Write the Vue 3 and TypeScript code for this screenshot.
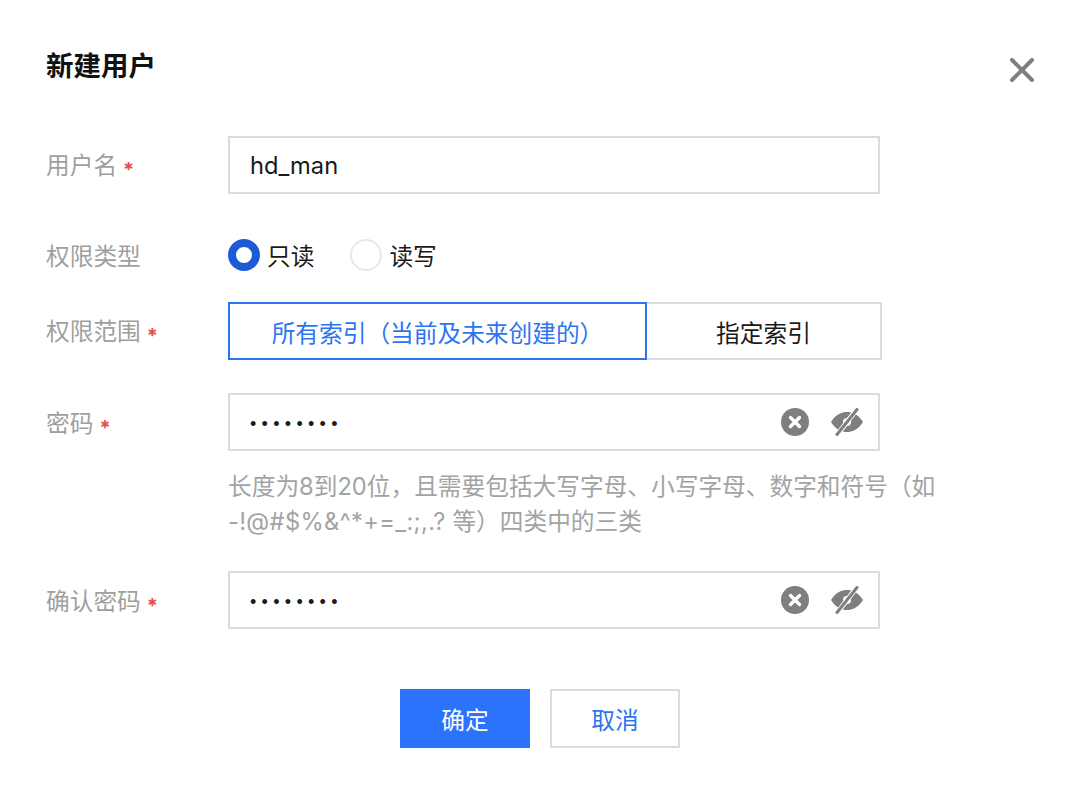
<script setup lang="ts">
import { ref } from 'vue'

const username = ref('hd_man')
const dots = '••••••••'
</script>

<template>
  <div class="dialog">
    <header class="head">
      <h1 class="title">新建用户</h1>
      <button class="close" aria-label="关闭">
        <svg viewBox="0 0 24 24" width="24" height="24">
          <path d="M2 2 L22 22 M22 2 L2 22" stroke="#7f7f7f" stroke-width="4" stroke-linecap="round" fill="none" />
        </svg>
      </button>
    </header>

    <div class="row r-name">
      <label class="label low">用户名<i class="req">*</i></label>
      <div class="input"><span class="value">{{ username }}</span></div>
    </div>

    <div class="row r-type">
      <label class="label lower">权限类型</label>
      <div class="radios">
        <span class="radio on"></span><span class="radio-text">只读</span>
        <span class="radio off"></span><span class="radio-text">读写</span>
      </div>
    </div>

    <div class="row r-scope">
      <label class="label up">权限范围<i class="req">*</i></label>
      <div class="segment">
        <span class="seg active">所有索引（当前及未来创建的）</span>
        <span class="seg other">指定索引</span>
      </div>
    </div>

    <div class="row r-pwd">
      <label class="label up">密码<i class="req">*</i></label>
      <div class="input">
        <span class="dots">{{ dots }}</span>
        <span class="icons">
          <svg viewBox="0 0 28 28" width="28" height="28">
            <circle cx="14" cy="14" r="14" fill="#7f7f7f" />
            <path d="M9.5 9.5 L18.5 18.5 M18.5 9.5 L9.5 18.5" stroke="#fff" stroke-width="3.4" stroke-linecap="round" />
          </svg>
          <svg class="eye" viewBox="0 0 32 28" width="32" height="28">
            <path d="M0 14 C5 6 11 4 16 4 C21 4 27 6 32 14 C27 22 21 24 16 24 C11 24 5 22 0 14 Z M16 10 A4 4 0 1 0 16 18 A4 4 0 1 0 16 10 Z" fill="#7f7f7f" fill-rule="evenodd" />
            <path d="M26 1 L6 27" stroke="#fff" stroke-width="5" />
            <path d="M26 1.5 L6 26.5" stroke="#7f7f7f" stroke-width="3" stroke-linecap="round" />
          </svg>
        </span>
      </div>
    </div>

    <p class="help">长度为8到20位，且需要包括大写字母、小写字母、数字和符号（如<br /><span class="sym">-!@#$%&amp;^*+=_:;,.?</span> 等）四类中的三类</p>

    <div class="row r-confirm">
      <label class="label up">确认密码<i class="req">*</i></label>
      <div class="input">
        <span class="dots">{{ dots }}</span>
        <span class="icons">
          <svg viewBox="0 0 28 28" width="28" height="28">
            <circle cx="14" cy="14" r="14" fill="#7f7f7f" />
            <path d="M9.5 9.5 L18.5 18.5 M18.5 9.5 L9.5 18.5" stroke="#fff" stroke-width="3.4" stroke-linecap="round" />
          </svg>
          <svg class="eye" viewBox="0 0 32 28" width="32" height="28">
            <path d="M0 14 C5 6 11 4 16 4 C21 4 27 6 32 14 C27 22 21 24 16 24 C11 24 5 22 0 14 Z M16 10 A4 4 0 1 0 16 18 A4 4 0 1 0 16 10 Z" fill="#7f7f7f" fill-rule="evenodd" />
            <path d="M26 1 L6 27" stroke="#fff" stroke-width="5" />
            <path d="M26 1.5 L6 26.5" stroke="#7f7f7f" stroke-width="3" stroke-linecap="round" />
          </svg>
        </span>
      </div>
    </div>

    <footer class="foot">
      <button class="btn primary">确定</button>
      <button class="btn ghost">取消</button>
    </footer>
  </div>
</template>

<style scoped>
.dialog {
  width: 1080px;
  height: 793px;
  box-sizing: border-box;
  padding: 0 0 0 46px;
  background: #fff;
  font-family: Inter, "Noto Sans CJK SC", sans-serif;
  font-size: 23.7px;
  color: #1a1a1a;
  overflow: hidden;
}
.head {
  height: 136px;
  display: flex;
  justify-content: space-between;
  align-items: flex-start;
  padding-right: 46px;
}
.title {
  margin: 46px 0 0;
  font-size: 27.5px;
  line-height: 40px;
  font-weight: 700;
  color: #111;
}
.close {
  margin-top: 58px;
  padding: 0;
  border: 0;
  background: none;
  line-height: 0;
}
.row {
  display: flex;
  align-items: center;
}
.label {
  width: 182px;
  flex: none;
  color: #9f9f9f;
  line-height: 34px;
}
.label.up {
  align-self: flex-start;
  margin-top: 14px;
}
.r-scope .label.up {
  margin-top: 13px;
}
.label.low {
  margin-top: 2px;
}
.label.lower {
  margin-top: 4px;
}
.req {
  font-style: normal;
  font-weight: 700;
  color: #e25050;
  margin-left: 6px;
  font-size: 20px;
  vertical-align: -3px;
  line-height: 0;
}
.input {
  width: 652px;
  height: 58px;
  box-sizing: border-box;
  border: 2px solid #d7dbe6;
  display: flex;
  align-items: center;
  justify-content: space-between;
  padding: 0 15px 0 20px;
  color: #1a1a1a;
}
.value { font-size: 23.7px; }
.dots {
  font-size: 18px;
  letter-spacing: 5.3px;
  margin-top: 4px;
  font-family: "Liberation Sans", sans-serif;
}
.icons {
  display: flex;
  align-items: center;
  gap: 22px;
}
.r-type {
  height: 58px;
  margin-top: 32px;
}
.radios {
  display: flex;
  align-items: center;
  height: 32px;
  margin-top: -1px;
}
.radio {
  width: 32px;
  height: 32px;
  box-sizing: border-box;
  border-radius: 50%;
  flex: none;
}
.radio.on {
  border: 8px solid #1c5ad6;
  background: #fff;
}
.radio.off {
  border: 2px solid #e6e8ef;
  margin-left: 36px;
}
.radio-text {
  margin-left: 7px;
  color: #1a1a1a;
}
.r-scope {
  margin-top: 18px;
}
.segment {
  display: flex;
  width: 654px;
  height: 58px;
}
.seg {
  box-sizing: border-box;
  height: 58px;
  padding-top: 2px;
  display: flex;
  align-items: center;
  justify-content: center;
}
.seg.active {
  width: 419px;
  border: 2px solid #2d74f4;
  color: #2d74f4;
}
.seg.other {
  width: 235px;
  border: 2px solid #d7dbe6;
  border-left: 0;
  color: #1a1a1a;
}
.r-pwd {
  margin-top: 33px;
}
.help {
  margin: 18px 0 0 182px;
  width: 760px;
  line-height: 35px;
  color: #a3a3a3;
}
.sym {
  letter-spacing: 0.33px;
}
.r-confirm {
  margin-top: 32px;
}
.foot {
  display: flex;
  justify-content: flex-start;
  gap: 20px;
  margin: 60px 0 0 354px;
}
.btn {
  width: 130px;
  height: 59px;
  box-sizing: border-box;
  font-family: inherit;
  font-size: 23.7px;
  padding: 0;
}
.btn.primary {
  background: #2b73fb;
  border: 0;
  color: #fff;
}
.btn.ghost {
  background: #fff;
  border: 2px solid #d7dbe6;
  color: #2d74f4;
}
</style>
